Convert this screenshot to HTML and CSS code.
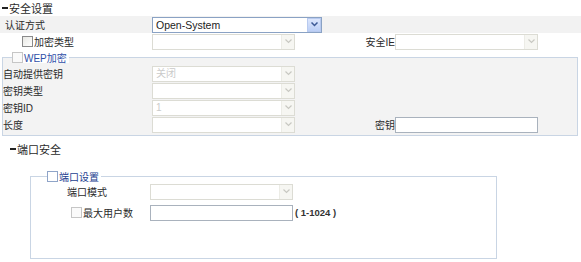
FILE: index.html
```html
<!DOCTYPE html>
<html lang="zh-CN">
<head>
  <meta charset="UTF-8" />
  <title>安全设置</title>
  <link rel="stylesheet" href="styles.css">
</head>
<body>

<div class="title"><span class="dash"></span>安全设置</div>

<div class="row gray">
  <label class="lbl">认证方式</label>
  <div class="sel active wide">
    <select><option>Open-System</option></select>
    <span class="arrow"><svg width="7" height="5" viewBox="0 0 7 5"><path d="M0.5 0.5 L3.5 3.5 L6.5 0.5" fill="none" stroke="#3d5a96" stroke-width="1.5"/></svg></span>
  </div>
</div>

<div class="row">
  <label class="lbl check-lbl"><input type="checkbox" class="chk dark" />加密类型</label>
  <div class="sel">
    <select disabled><option></option></select>
    <span class="arrow"><svg width="7" height="5" viewBox="0 0 7 5"><path d="M0.5 0.5 L3.5 3.5 L6.5 0.5" fill="none" stroke="#c8c8c2" stroke-width="1.2"/></svg></span>
  </div>
  <label class="lbl2">安全IE</label>
  <div class="sel">
    <select disabled><option></option></select>
    <span class="arrow"><svg width="7" height="5" viewBox="0 0 7 5"><path d="M0.5 0.5 L3.5 3.5 L6.5 0.5" fill="none" stroke="#c8c8c2" stroke-width="1.2"/></svg></span>
  </div>
</div>

<fieldset class="wep">
  <legend><input type="checkbox" class="chk light" />WEP加密</legend>

  <div class="row">
    <label class="lbl">自动提供密钥</label>
    <div class="sel">
      <select disabled><option>关闭</option></select>
      <span class="arrow"><svg width="7" height="5" viewBox="0 0 7 5"><path d="M0.5 0.5 L3.5 3.5 L6.5 0.5" fill="none" stroke="#c8c8c2" stroke-width="1.2"/></svg></span>
    </div>
  </div>
  <div class="row">
    <label class="lbl">密钥类型</label>
    <div class="sel">
      <select disabled><option></option></select>
      <span class="arrow"><svg width="7" height="5" viewBox="0 0 7 5"><path d="M0.5 0.5 L3.5 3.5 L6.5 0.5" fill="none" stroke="#c8c8c2" stroke-width="1.2"/></svg></span>
    </div>
  </div>
  <div class="row">
    <label class="lbl">密钥ID</label>
    <div class="sel">
      <select disabled><option>1</option></select>
      <span class="arrow"><svg width="7" height="5" viewBox="0 0 7 5"><path d="M0.5 0.5 L3.5 3.5 L6.5 0.5" fill="none" stroke="#c8c8c2" stroke-width="1.2"/></svg></span>
    </div>
  </div>
  <div class="row">
    <label class="lbl">长度</label>
    <div class="sel">
      <select disabled><option></option></select>
      <span class="arrow"><svg width="7" height="5" viewBox="0 0 7 5"><path d="M0.5 0.5 L3.5 3.5 L6.5 0.5" fill="none" stroke="#c8c8c2" stroke-width="1.2"/></svg></span>
    </div>
    <label class="lbl2">密钥</label>
    <input type="text" class="txt" />
  </div>
</fieldset>

<div class="title title-port"><span class="dash"></span>端口安全</div>

<fieldset class="port">
  <legend><input type="checkbox" class="chk blue" />端口设置</legend>

  <div class="row">
    <label class="lbl">端口模式</label>
    <div class="sel">
      <select disabled><option></option></select>
      <span class="arrow"><svg width="7" height="5" viewBox="0 0 7 5"><path d="M0.5 0.5 L3.5 3.5 L6.5 0.5" fill="none" stroke="#c8c8c2" stroke-width="1.2"/></svg></span>
    </div>
  </div>
  <div class="row">
    <label class="lbl check-lbl"><input type="checkbox" class="chk light" />最大用户数</label>
    <input type="text" class="txt" />
    <span class="range">( 1-1024 )</span>
  </div>
</fieldset>

</body>
</html>
```

FILE: styles.css
```css
body {
  margin: 0;
  width: 581px;
  font-family: "Liberation Sans", "Noto Sans CJK SC", sans-serif;
  font-size: 10px;
  color: #2a2a2a;
  background: #fff;
}

.title {
  height: 16px;
  display: flex;
  align-items: center;
  padding-left: 2px;
  font-size: 11px;
}
.dash {
  width: 6px;
  height: 2px;
  margin-right: 1px;
  background: #222;
}
.title-port {
  height: 14px;
  margin-top: 6px;
  padding-left: 10px;
}

.row {
  display: flex;
  align-items: center;
  height: 17px;
}
.row.gray {
  background: #f2f2f2;
}

.lbl {
  display: flex;
  align-items: center;
  width: 152px;
  padding-left: 5px;
  box-sizing: border-box;
  white-space: nowrap;
}
.check-lbl {
  padding-left: 22px;
}
.lbl2 {
  width: 100px;
  text-align: right;
}

/* select boxes */
.sel {
  display: flex;
  width: 143px;
  height: 16px;
  box-sizing: border-box;
  border: 1px solid #dcdcd4;
  background: #fff;
}
.sel.wide {
  width: 170px;
}
.sel.active {
  border-color: #8aa2c4;
}
.sel select {
  flex: 1;
  min-width: 0;
  appearance: none;
  -webkit-appearance: none;
  border: 0;
  outline: none;
  background: transparent;
  font: inherit;
  color: #b4b4b4;
  padding: 0 3px;
  height: 14px;
  line-height: 14px;
}
.sel.active select {
  color: #222;
  font-size: 10.5px;
}
.sel .arrow {
  width: 12px;
  display: flex;
  align-items: center;
  justify-content: center;
  background: #f6f6f2;
  border-left: 1px solid #ecece6;
}
.sel.active .arrow {
  background: linear-gradient(#dce6fc, #bccff6);
  border: 1px solid #b8caef;
}

.txt {
  width: 143px;
  height: 16px;
  box-sizing: border-box;
  border: 1px solid #a9b2bd;
  background: #fff;
  padding: 0 2px;
  font: inherit;
}

/* checkboxes */
.chk {
  appearance: none;
  -webkit-appearance: none;
  width: 11px;
  height: 11px;
  margin: 0 1px 0 0;
  box-sizing: border-box;
  border: 1px solid #8a8a8a;
  background: linear-gradient(135deg, #e8e8e4, #fff);
}
.chk.light {
  border-color: #c6c6c6;
  background: #fafafa;
}
.chk.blue {
  border-color: #8fa4c8;
  background: #fff;
}

/* fieldsets */
fieldset {
  border: 1px solid #c9d5e4;
  padding: 0;
  min-width: 0;
}
legend {
  display: flex;
  align-items: center;
  height: 12px;
  padding: 0 2px 0 0;
  color: #3050a8;
}

.wep {
  margin: 1px 3px 0 2px;
  padding: 2px 0 2px;
  background: #f3f3f3;
}
.wep legend {
  margin-left: 9px;
  background: #fff;
}
.wep .lbl {
  width: 149px;
  padding-left: 0;
}

.port {
  margin: 14px 0 0 30px;
  width: 467px;
  box-sizing: border-box;
  padding: 1px 0 37px;
}
.port legend {
  margin-left: 16px;
  color: #23408f;
}
.port .row + .row {
  margin-top: 4px;
}
.port .lbl {
  width: 119px;
  padding-left: 36px;
}
.port .check-lbl {
  padding-left: 40px;
}
.range {
  padding-left: 2px;
  font-weight: bold;
  color: #333;
  font-size: 9.5px;
  white-space: pre;
}
```
